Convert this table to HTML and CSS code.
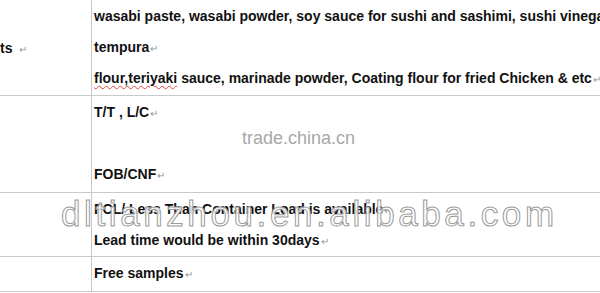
FILE: index.html
```html
<!DOCTYPE html>
<html lang="en">
<head>
    <meta charset="UTF-8">
    <title>Product details</title>
    <link rel="stylesheet" href="styles.css">
</head>
<body>
    <div class="sheet">
        <div class="spec-table">
            <div class="cell label-cell">
                <p class="line label">ts <span class="ret">&#8629;</span></p>
            </div>
            <div class="cell">
                <p class="line">wasabi paste, wasabi powder, soy sauce for sushi and sashimi, sushi vinegar,</p>
                <p class="line">tempura<span class="ret">&#8629;</span></p>
                <p class="line"><span class="spell">flour,teriyaki</span> sauce, marinade powder, Coating flour for fried Chicken &amp; etc<span class="ret">&#8629;</span></p>
            </div>

            <div class="cell label-cell"></div>
            <div class="cell">
                <p class="line">T/T , L/C<span class="ret">&#8629;</span></p>
                <p class="line">&nbsp;</p>
                <p class="line">FOB/CNF<span class="ret">&#8629;</span></p>
            </div>

            <div class="cell label-cell"></div>
            <div class="cell">
                <p class="line">FCL/ Less Than Container Load is available<span class="ret">&#8629;</span></p>
                <p class="line">Lead time would be within 30days<span class="ret">&#8629;</span></p>
            </div>

            <div class="cell label-cell"></div>
            <div class="cell">
                <p class="line">Free samples<span class="ret">&#8629;</span></p>
            </div>
        </div>

        <div class="mark-trade">trade.china.cn</div>
        <div class="mark-shop">dltianzhou.en.alibaba.com</div>
    </div>
</body>
</html>
```

FILE: styles.css
```css
html, body {
    margin: 0;
    padding: 0;
    background-color: white;
    overflow: hidden;
}
.sheet {
    position: relative;
    width: 600px;
    height: 293px;
    overflow: hidden;
    font-family: "Liberation Sans", Arial, sans-serif;
}
.spec-table {
    display: grid;
    grid-template-columns: 91px 1fr;
    grid-template-rows: 95px 96px 63px 34px;
    gap: 1px;
    padding-bottom: 1px;
    background-color: #c9c9c9;
}
.cell {
    background-color: white;
    padding: 1px 0 0 2px;
    overflow: hidden;
    white-space: nowrap;
}
.label-cell {
    padding-left: 0;
}
.spec-table > .cell:first-child {
    padding-top: 2px;
}
.line {
    margin: 0;
    height: 31px;
    line-height: 31px;
    font-size: 14px;
    font-weight: bold;
    color: #111;
}
.label {
    padding-top: 31px;
}
.ret {
    font-size: 10px;
    font-weight: normal;
    color: #999;
    margin-left: 1px;
}
.label .ret {
    margin-left: 3px;
}
.spell {
    text-decoration: underline wavy #e04040;
    text-decoration-thickness: 1px;
    text-underline-offset: 2px;
}
.mark-trade {
    position: absolute;
    left: 242px;
    top: 128px;
    font-size: 18px;
    color: #a8a8a8;
}
.mark-shop {
    position: absolute;
    left: 61px;
    top: 194px;
    font-size: 35px;
    letter-spacing: 3.6px;
    color: rgba(255, 255, 255, 0.85);
    -webkit-text-stroke: 1px #9a9a9a;
    white-space: nowrap;
}
```
